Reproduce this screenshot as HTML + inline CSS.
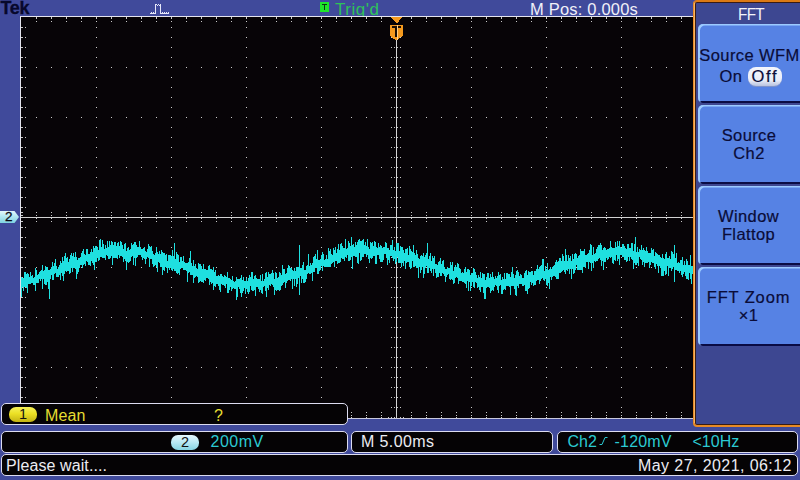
<!DOCTYPE html>
<html>
<head>
<meta charset="utf-8">
<title>Tek</title>
<style>
html,body{margin:0;padding:0;overflow:hidden;}
#root{position:absolute;left:0;top:0;width:800px;height:480px;overflow:hidden;}
body{width:800px;height:480px;overflow:hidden;background:#404a9b;font-family:"Liberation Sans",sans-serif;position:relative;}
.abs{position:absolute;}
#plot{left:21px;top:17px;width:675px;height:401px;background:#070407;}
#bl{left:20px;top:16px;width:1px;height:402px;background:#e4e4ee;}
#bt{left:20px;top:16px;width:676px;height:1px;background:#e4e4ee;}
#bb{left:20px;top:418px;width:676px;height:1px;background:#c8c8dc;}
svg{position:absolute;left:0;top:0;}
.t{position:absolute;white-space:nowrap;line-height:1;}
#tek{left:0.5px;top:-1px;font-size:18px;font-weight:bold;color:#07082c;letter-spacing:-0.3px;-webkit-text-stroke:0.3px #07082c;}
#trig{left:335px;top:1px;font-size:17px;color:#2ec25a;letter-spacing:0.5px;}
#mpos{left:530px;top:1px;font-size:16.5px;color:#f0f0f8;letter-spacing:0.2px;}
#tbox{left:320px;top:2px;width:9px;height:10px;background:#1fe62a;}
#menu{left:693px;top:0px;width:120px;height:423px;border:2.500px solid #e88a26;border-top-color:#dc7a14;border-radius:4px;background:#3d4791;box-sizing:content-box;box-shadow:inset 0 0 0 1px #3a1c14;}
.btn{position:absolute;left:698px;width:110px;height:79px;border-radius:5px;background:linear-gradient(to bottom,#5682e4 0,#5682e4 77.5px,#0a0c44 77.5px,#0a0c44 79px);box-shadow:inset 2px 1.500px 0 #9ccaff;}
.bt{position:absolute;left:697px;width:103px;text-align:center;font-size:16.5px;letter-spacing:0.4px;color:#0a0c38;line-height:18.200px;white-space:nowrap;-webkit-text-stroke:0.2px #0a0c38;}
#fft{left:737.500px;top:6px;font-size:16.5px;letter-spacing:-0.8px;color:#f4f4fa;transform:scaleX(0.93);transform-origin:0 0;}
.box{position:absolute;background:#050305;border:1px solid #dcdcf0;border-radius:5px;box-sizing:border-box;}
.pill{position:absolute;border-radius:7px;text-align:center;color:#111;font-size:14px;line-height:14px;}
</style>
</head>
<body>
<div id="root">
<div class="t" id="tek">Tek</div>
<div class="abs" id="tbox"></div>
<svg width="800" height="480" viewBox="0 0 800 480" shape-rendering="crispEdges"><path fill="#0a3a14" d="M322 4h5v1h-5zM324 4h1v6h-1z"/></svg>
<div class="t" id="trig">Trig'd</div>
<div class="t" id="mpos">M Pos: 0.000s</div>
<div class="abs" id="plot"></div>
<div class="abs" id="bl"></div>
<div class="abs" id="bt"></div>
<div class="abs" id="bb"></div>

<svg width="800" height="480" viewBox="0 0 800 480" shape-rendering="crispEdges">
<path fill="#c9c9c9" d="M25 27h1v1h-1zM25 37h1v1h-1zM25 47h1v1h-1zM25 57h1v1h-1zM25 67h1v1h-1zM25 77h1v1h-1zM25 87h1v1h-1zM25 97h1v1h-1zM25 107h1v1h-1zM25 117h1v1h-1zM25 127h1v1h-1zM25 137h1v1h-1zM25 147h1v1h-1zM25 157h1v1h-1zM25 167h1v1h-1zM25 177h1v1h-1zM25 187h1v1h-1zM25 197h1v1h-1zM25 207h1v1h-1zM25 217h1v1h-1zM25 227h1v1h-1zM25 237h1v1h-1zM25 247h1v1h-1zM25 257h1v1h-1zM25 267h1v1h-1zM25 277h1v1h-1zM25 287h1v1h-1zM25 297h1v1h-1zM25 307h1v1h-1zM25 317h1v1h-1zM25 327h1v1h-1zM25 337h1v1h-1zM25 347h1v1h-1zM25 357h1v1h-1zM25 367h1v1h-1zM25 377h1v1h-1zM25 387h1v1h-1zM25 397h1v1h-1zM25 407h1v1h-1zM36 21h1v1h-1zM36 67h1v1h-1zM36 117h1v1h-1zM36 167h1v1h-1zM36 212h1v1h-1zM36 215h1v1h-1zM36 217h1v1h-1zM36 218h1v1h-1zM36 221h1v1h-1zM36 267h1v1h-1zM36 317h1v1h-1zM36 367h1v1h-1zM36 412h1v1h-1zM36 415h1v1h-1zM51 21h1v1h-1zM51 67h1v1h-1zM51 117h1v1h-1zM51 167h1v1h-1zM51 212h1v1h-1zM51 215h1v1h-1zM51 217h1v1h-1zM51 218h1v1h-1zM51 221h1v1h-1zM51 267h1v1h-1zM51 317h1v1h-1zM51 367h1v1h-1zM51 412h1v1h-1zM51 415h1v1h-1zM66 21h1v1h-1zM66 67h1v1h-1zM66 117h1v1h-1zM66 167h1v1h-1zM66 212h1v1h-1zM66 215h1v1h-1zM66 217h1v1h-1zM66 218h1v1h-1zM66 221h1v1h-1zM66 267h1v1h-1zM66 317h1v1h-1zM66 367h1v1h-1zM66 412h1v1h-1zM66 415h1v1h-1zM81 21h1v1h-1zM81 67h1v1h-1zM81 117h1v1h-1zM81 167h1v1h-1zM81 212h1v1h-1zM81 215h1v1h-1zM81 217h1v1h-1zM81 218h1v1h-1zM81 221h1v1h-1zM81 267h1v1h-1zM81 317h1v1h-1zM81 367h1v1h-1zM81 412h1v1h-1zM81 415h1v1h-1zM96 21h1v1h-1zM96 27h1v1h-1zM96 37h1v1h-1zM96 47h1v1h-1zM96 57h1v1h-1zM96 67h1v1h-1zM96 77h1v1h-1zM96 87h1v1h-1zM96 97h1v1h-1zM96 107h1v1h-1zM96 117h1v1h-1zM96 127h1v1h-1zM96 137h1v1h-1zM96 147h1v1h-1zM96 157h1v1h-1zM96 167h1v1h-1zM96 177h1v1h-1zM96 187h1v1h-1zM96 197h1v1h-1zM96 207h1v1h-1zM96 212h1v1h-1zM96 215h1v1h-1zM96 217h1v1h-1zM96 218h1v1h-1zM96 221h1v1h-1zM96 227h1v1h-1zM96 237h1v1h-1zM96 247h1v1h-1zM96 257h1v1h-1zM96 267h1v1h-1zM96 277h1v1h-1zM96 287h1v1h-1zM96 297h1v1h-1zM96 307h1v1h-1zM96 317h1v1h-1zM96 327h1v1h-1zM96 337h1v1h-1zM96 347h1v1h-1zM96 357h1v1h-1zM96 367h1v1h-1zM96 377h1v1h-1zM96 387h1v1h-1zM96 397h1v1h-1zM96 407h1v1h-1zM96 412h1v1h-1zM96 415h1v1h-1zM111 21h1v1h-1zM111 67h1v1h-1zM111 117h1v1h-1zM111 167h1v1h-1zM111 212h1v1h-1zM111 215h1v1h-1zM111 217h1v1h-1zM111 218h1v1h-1zM111 221h1v1h-1zM111 267h1v1h-1zM111 317h1v1h-1zM111 367h1v1h-1zM111 412h1v1h-1zM111 415h1v1h-1zM126 21h1v1h-1zM126 67h1v1h-1zM126 117h1v1h-1zM126 167h1v1h-1zM126 212h1v1h-1zM126 215h1v1h-1zM126 217h1v1h-1zM126 218h1v1h-1zM126 221h1v1h-1zM126 267h1v1h-1zM126 317h1v1h-1zM126 367h1v1h-1zM126 412h1v1h-1zM126 415h1v1h-1zM141 21h1v1h-1zM141 67h1v1h-1zM141 117h1v1h-1zM141 167h1v1h-1zM141 212h1v1h-1zM141 215h1v1h-1zM141 217h1v1h-1zM141 218h1v1h-1zM141 221h1v1h-1zM141 267h1v1h-1zM141 317h1v1h-1zM141 367h1v1h-1zM141 412h1v1h-1zM141 415h1v1h-1zM156 21h1v1h-1zM156 67h1v1h-1zM156 117h1v1h-1zM156 167h1v1h-1zM156 212h1v1h-1zM156 215h1v1h-1zM156 217h1v1h-1zM156 218h1v1h-1zM156 221h1v1h-1zM156 267h1v1h-1zM156 317h1v1h-1zM156 367h1v1h-1zM156 412h1v1h-1zM156 415h1v1h-1zM171 21h1v1h-1zM171 27h1v1h-1zM171 37h1v1h-1zM171 47h1v1h-1zM171 57h1v1h-1zM171 67h1v1h-1zM171 77h1v1h-1zM171 87h1v1h-1zM171 97h1v1h-1zM171 107h1v1h-1zM171 117h1v1h-1zM171 127h1v1h-1zM171 137h1v1h-1zM171 147h1v1h-1zM171 157h1v1h-1zM171 167h1v1h-1zM171 177h1v1h-1zM171 187h1v1h-1zM171 197h1v1h-1zM171 207h1v1h-1zM171 212h1v1h-1zM171 215h1v1h-1zM171 217h1v1h-1zM171 218h1v1h-1zM171 221h1v1h-1zM171 227h1v1h-1zM171 237h1v1h-1zM171 247h1v1h-1zM171 257h1v1h-1zM171 267h1v1h-1zM171 277h1v1h-1zM171 287h1v1h-1zM171 297h1v1h-1zM171 307h1v1h-1zM171 317h1v1h-1zM171 327h1v1h-1zM171 337h1v1h-1zM171 347h1v1h-1zM171 357h1v1h-1zM171 367h1v1h-1zM171 377h1v1h-1zM171 387h1v1h-1zM171 397h1v1h-1zM171 407h1v1h-1zM171 412h1v1h-1zM171 415h1v1h-1zM186 21h1v1h-1zM186 67h1v1h-1zM186 117h1v1h-1zM186 167h1v1h-1zM186 212h1v1h-1zM186 215h1v1h-1zM186 217h1v1h-1zM186 218h1v1h-1zM186 221h1v1h-1zM186 267h1v1h-1zM186 317h1v1h-1zM186 367h1v1h-1zM186 412h1v1h-1zM186 415h1v1h-1zM201 21h1v1h-1zM201 67h1v1h-1zM201 117h1v1h-1zM201 167h1v1h-1zM201 212h1v1h-1zM201 215h1v1h-1zM201 217h1v1h-1zM201 218h1v1h-1zM201 221h1v1h-1zM201 267h1v1h-1zM201 317h1v1h-1zM201 367h1v1h-1zM201 412h1v1h-1zM201 415h1v1h-1zM216 21h1v1h-1zM216 67h1v1h-1zM216 117h1v1h-1zM216 167h1v1h-1zM216 212h1v1h-1zM216 215h1v1h-1zM216 217h1v1h-1zM216 218h1v1h-1zM216 221h1v1h-1zM216 267h1v1h-1zM216 317h1v1h-1zM216 367h1v1h-1zM216 412h1v1h-1zM216 415h1v1h-1zM231 21h1v1h-1zM231 67h1v1h-1zM231 117h1v1h-1zM231 167h1v1h-1zM231 212h1v1h-1zM231 215h1v1h-1zM231 217h1v1h-1zM231 218h1v1h-1zM231 221h1v1h-1zM231 267h1v1h-1zM231 317h1v1h-1zM231 367h1v1h-1zM231 412h1v1h-1zM231 415h1v1h-1zM246 21h1v1h-1zM246 27h1v1h-1zM246 37h1v1h-1zM246 47h1v1h-1zM246 57h1v1h-1zM246 67h1v1h-1zM246 77h1v1h-1zM246 87h1v1h-1zM246 97h1v1h-1zM246 107h1v1h-1zM246 117h1v1h-1zM246 127h1v1h-1zM246 137h1v1h-1zM246 147h1v1h-1zM246 157h1v1h-1zM246 167h1v1h-1zM246 177h1v1h-1zM246 187h1v1h-1zM246 197h1v1h-1zM246 207h1v1h-1zM246 212h1v1h-1zM246 215h1v1h-1zM246 217h1v1h-1zM246 218h1v1h-1zM246 221h1v1h-1zM246 227h1v1h-1zM246 237h1v1h-1zM246 247h1v1h-1zM246 257h1v1h-1zM246 267h1v1h-1zM246 277h1v1h-1zM246 287h1v1h-1zM246 297h1v1h-1zM246 307h1v1h-1zM246 317h1v1h-1zM246 327h1v1h-1zM246 337h1v1h-1zM246 347h1v1h-1zM246 357h1v1h-1zM246 367h1v1h-1zM246 377h1v1h-1zM246 387h1v1h-1zM246 397h1v1h-1zM246 407h1v1h-1zM246 412h1v1h-1zM246 415h1v1h-1zM261 21h1v1h-1zM261 67h1v1h-1zM261 117h1v1h-1zM261 167h1v1h-1zM261 212h1v1h-1zM261 215h1v1h-1zM261 217h1v1h-1zM261 218h1v1h-1zM261 221h1v1h-1zM261 267h1v1h-1zM261 317h1v1h-1zM261 367h1v1h-1zM261 412h1v1h-1zM261 415h1v1h-1zM276 21h1v1h-1zM276 67h1v1h-1zM276 117h1v1h-1zM276 167h1v1h-1zM276 212h1v1h-1zM276 215h1v1h-1zM276 217h1v1h-1zM276 218h1v1h-1zM276 221h1v1h-1zM276 267h1v1h-1zM276 317h1v1h-1zM276 367h1v1h-1zM276 412h1v1h-1zM276 415h1v1h-1zM291 21h1v1h-1zM291 67h1v1h-1zM291 117h1v1h-1zM291 167h1v1h-1zM291 212h1v1h-1zM291 215h1v1h-1zM291 217h1v1h-1zM291 218h1v1h-1zM291 221h1v1h-1zM291 267h1v1h-1zM291 317h1v1h-1zM291 367h1v1h-1zM291 412h1v1h-1zM291 415h1v1h-1zM306 21h1v1h-1zM306 67h1v1h-1zM306 117h1v1h-1zM306 167h1v1h-1zM306 212h1v1h-1zM306 215h1v1h-1zM306 217h1v1h-1zM306 218h1v1h-1zM306 221h1v1h-1zM306 267h1v1h-1zM306 317h1v1h-1zM306 367h1v1h-1zM306 412h1v1h-1zM306 415h1v1h-1zM321 21h1v1h-1zM321 27h1v1h-1zM321 37h1v1h-1zM321 47h1v1h-1zM321 57h1v1h-1zM321 67h1v1h-1zM321 77h1v1h-1zM321 87h1v1h-1zM321 97h1v1h-1zM321 107h1v1h-1zM321 117h1v1h-1zM321 127h1v1h-1zM321 137h1v1h-1zM321 147h1v1h-1zM321 157h1v1h-1zM321 167h1v1h-1zM321 177h1v1h-1zM321 187h1v1h-1zM321 197h1v1h-1zM321 207h1v1h-1zM321 212h1v1h-1zM321 215h1v1h-1zM321 217h1v1h-1zM321 218h1v1h-1zM321 221h1v1h-1zM321 227h1v1h-1zM321 237h1v1h-1zM321 247h1v1h-1zM321 257h1v1h-1zM321 267h1v1h-1zM321 277h1v1h-1zM321 287h1v1h-1zM321 297h1v1h-1zM321 307h1v1h-1zM321 317h1v1h-1zM321 327h1v1h-1zM321 337h1v1h-1zM321 347h1v1h-1zM321 357h1v1h-1zM321 367h1v1h-1zM321 377h1v1h-1zM321 387h1v1h-1zM321 397h1v1h-1zM321 407h1v1h-1zM321 412h1v1h-1zM321 415h1v1h-1zM336 21h1v1h-1zM336 67h1v1h-1zM336 117h1v1h-1zM336 167h1v1h-1zM336 212h1v1h-1zM336 215h1v1h-1zM336 217h1v1h-1zM336 218h1v1h-1zM336 221h1v1h-1zM336 267h1v1h-1zM336 317h1v1h-1zM336 367h1v1h-1zM336 412h1v1h-1zM336 415h1v1h-1zM351 21h1v1h-1zM351 67h1v1h-1zM351 117h1v1h-1zM351 167h1v1h-1zM351 212h1v1h-1zM351 215h1v1h-1zM351 217h1v1h-1zM351 218h1v1h-1zM351 221h1v1h-1zM351 267h1v1h-1zM351 317h1v1h-1zM351 367h1v1h-1zM351 412h1v1h-1zM351 415h1v1h-1zM366 21h1v1h-1zM366 67h1v1h-1zM366 117h1v1h-1zM366 167h1v1h-1zM366 212h1v1h-1zM366 215h1v1h-1zM366 217h1v1h-1zM366 218h1v1h-1zM366 221h1v1h-1zM366 267h1v1h-1zM366 317h1v1h-1zM366 367h1v1h-1zM366 412h1v1h-1zM366 415h1v1h-1zM381 21h1v1h-1zM381 67h1v1h-1zM381 117h1v1h-1zM381 167h1v1h-1zM381 212h1v1h-1zM381 215h1v1h-1zM381 217h1v1h-1zM381 218h1v1h-1zM381 221h1v1h-1zM381 267h1v1h-1zM381 317h1v1h-1zM381 367h1v1h-1zM381 412h1v1h-1zM381 415h1v1h-1zM388 417h1v1h-1zM391 27h1v1h-1zM391 37h1v1h-1zM391 47h1v1h-1zM391 57h1v1h-1zM391 67h1v1h-1zM391 77h1v1h-1zM391 87h1v1h-1zM391 97h1v1h-1zM391 107h1v1h-1zM391 117h1v1h-1zM391 127h1v1h-1zM391 137h1v1h-1zM391 147h1v1h-1zM391 157h1v1h-1zM391 167h1v1h-1zM391 177h1v1h-1zM391 187h1v1h-1zM391 197h1v1h-1zM391 207h1v1h-1zM391 217h1v1h-1zM391 227h1v1h-1zM391 237h1v1h-1zM391 247h1v1h-1zM391 257h1v1h-1zM391 267h1v1h-1zM391 277h1v1h-1zM391 287h1v1h-1zM391 297h1v1h-1zM391 307h1v1h-1zM391 317h1v1h-1zM391 327h1v1h-1zM391 337h1v1h-1zM391 347h1v1h-1zM391 357h1v1h-1zM391 367h1v1h-1zM391 377h1v1h-1zM391 387h1v1h-1zM391 397h1v1h-1zM391 407h1v1h-1zM391 417h1v1h-1zM394 27h1v1h-1zM394 37h1v1h-1zM394 47h1v1h-1zM394 57h1v1h-1zM394 67h1v1h-1zM394 77h1v1h-1zM394 87h1v1h-1zM394 97h1v1h-1zM394 107h1v1h-1zM394 117h1v1h-1zM394 127h1v1h-1zM394 137h1v1h-1zM394 147h1v1h-1zM394 157h1v1h-1zM394 167h1v1h-1zM394 177h1v1h-1zM394 187h1v1h-1zM394 197h1v1h-1zM394 207h1v1h-1zM394 217h1v1h-1zM394 227h1v1h-1zM394 237h1v1h-1zM394 247h1v1h-1zM394 257h1v1h-1zM394 267h1v1h-1zM394 277h1v1h-1zM394 287h1v1h-1zM394 297h1v1h-1zM394 307h1v1h-1zM394 317h1v1h-1zM394 327h1v1h-1zM394 337h1v1h-1zM394 347h1v1h-1zM394 357h1v1h-1zM394 367h1v1h-1zM394 377h1v1h-1zM394 387h1v1h-1zM394 397h1v1h-1zM394 407h1v1h-1zM394 417h1v1h-1zM396 21h1v1h-1zM396 27h1v1h-1zM396 37h1v1h-1zM396 47h1v1h-1zM396 57h1v1h-1zM396 67h1v1h-1zM396 77h1v1h-1zM396 87h1v1h-1zM396 97h1v1h-1zM396 107h1v1h-1zM396 117h1v1h-1zM396 127h1v1h-1zM396 137h1v1h-1zM396 147h1v1h-1zM396 157h1v1h-1zM396 167h1v1h-1zM396 177h1v1h-1zM396 187h1v1h-1zM396 197h1v1h-1zM396 207h1v1h-1zM396 212h1v1h-1zM396 215h1v1h-1zM396 217h1v1h-1zM396 218h1v1h-1zM396 221h1v1h-1zM396 227h1v1h-1zM396 237h1v1h-1zM396 247h1v1h-1zM396 257h1v1h-1zM396 267h1v1h-1zM396 277h1v1h-1zM396 287h1v1h-1zM396 297h1v1h-1zM396 307h1v1h-1zM396 317h1v1h-1zM396 327h1v1h-1zM396 337h1v1h-1zM396 347h1v1h-1zM396 357h1v1h-1zM396 367h1v1h-1zM396 377h1v1h-1zM396 387h1v1h-1zM396 397h1v1h-1zM396 407h1v1h-1zM396 412h1v1h-1zM396 415h1v1h-1zM397 27h1v1h-1zM397 37h1v1h-1zM397 47h1v1h-1zM397 57h1v1h-1zM397 67h1v1h-1zM397 77h1v1h-1zM397 87h1v1h-1zM397 97h1v1h-1zM397 107h1v1h-1zM397 117h1v1h-1zM397 127h1v1h-1zM397 137h1v1h-1zM397 147h1v1h-1zM397 157h1v1h-1zM397 167h1v1h-1zM397 177h1v1h-1zM397 187h1v1h-1zM397 197h1v1h-1zM397 207h1v1h-1zM397 217h1v1h-1zM397 227h1v1h-1zM397 237h1v1h-1zM397 247h1v1h-1zM397 257h1v1h-1zM397 267h1v1h-1zM397 277h1v1h-1zM397 287h1v1h-1zM397 297h1v1h-1zM397 307h1v1h-1zM397 317h1v1h-1zM397 327h1v1h-1zM397 337h1v1h-1zM397 347h1v1h-1zM397 357h1v1h-1zM397 367h1v1h-1zM397 377h1v1h-1zM397 387h1v1h-1zM397 397h1v1h-1zM397 407h1v1h-1zM400 27h1v1h-1zM400 37h1v1h-1zM400 47h1v1h-1zM400 57h1v1h-1zM400 67h1v1h-1zM400 77h1v1h-1zM400 87h1v1h-1zM400 97h1v1h-1zM400 107h1v1h-1zM400 117h1v1h-1zM400 127h1v1h-1zM400 137h1v1h-1zM400 147h1v1h-1zM400 157h1v1h-1zM400 167h1v1h-1zM400 177h1v1h-1zM400 187h1v1h-1zM400 197h1v1h-1zM400 207h1v1h-1zM400 217h1v1h-1zM400 227h1v1h-1zM400 237h1v1h-1zM400 247h1v1h-1zM400 257h1v1h-1zM400 267h1v1h-1zM400 277h1v1h-1zM400 287h1v1h-1zM400 297h1v1h-1zM400 307h1v1h-1zM400 317h1v1h-1zM400 327h1v1h-1zM400 337h1v1h-1zM400 347h1v1h-1zM400 357h1v1h-1zM400 367h1v1h-1zM400 377h1v1h-1zM400 387h1v1h-1zM400 397h1v1h-1zM400 407h1v1h-1zM400 417h1v1h-1zM403 417h1v1h-1zM411 21h1v1h-1zM411 67h1v1h-1zM411 117h1v1h-1zM411 167h1v1h-1zM411 212h1v1h-1zM411 215h1v1h-1zM411 217h1v1h-1zM411 218h1v1h-1zM411 221h1v1h-1zM411 267h1v1h-1zM411 317h1v1h-1zM411 367h1v1h-1zM411 412h1v1h-1zM411 415h1v1h-1zM426 21h1v1h-1zM426 67h1v1h-1zM426 117h1v1h-1zM426 167h1v1h-1zM426 212h1v1h-1zM426 215h1v1h-1zM426 217h1v1h-1zM426 218h1v1h-1zM426 221h1v1h-1zM426 267h1v1h-1zM426 317h1v1h-1zM426 367h1v1h-1zM426 412h1v1h-1zM426 415h1v1h-1zM441 21h1v1h-1zM441 67h1v1h-1zM441 117h1v1h-1zM441 167h1v1h-1zM441 212h1v1h-1zM441 215h1v1h-1zM441 217h1v1h-1zM441 218h1v1h-1zM441 221h1v1h-1zM441 267h1v1h-1zM441 317h1v1h-1zM441 367h1v1h-1zM441 412h1v1h-1zM441 415h1v1h-1zM456 21h1v1h-1zM456 67h1v1h-1zM456 117h1v1h-1zM456 167h1v1h-1zM456 212h1v1h-1zM456 215h1v1h-1zM456 217h1v1h-1zM456 218h1v1h-1zM456 221h1v1h-1zM456 267h1v1h-1zM456 317h1v1h-1zM456 367h1v1h-1zM456 412h1v1h-1zM456 415h1v1h-1zM471 21h1v1h-1zM471 27h1v1h-1zM471 37h1v1h-1zM471 47h1v1h-1zM471 57h1v1h-1zM471 67h1v1h-1zM471 77h1v1h-1zM471 87h1v1h-1zM471 97h1v1h-1zM471 107h1v1h-1zM471 117h1v1h-1zM471 127h1v1h-1zM471 137h1v1h-1zM471 147h1v1h-1zM471 157h1v1h-1zM471 167h1v1h-1zM471 177h1v1h-1zM471 187h1v1h-1zM471 197h1v1h-1zM471 207h1v1h-1zM471 212h1v1h-1zM471 215h1v1h-1zM471 217h1v1h-1zM471 218h1v1h-1zM471 221h1v1h-1zM471 227h1v1h-1zM471 237h1v1h-1zM471 247h1v1h-1zM471 257h1v1h-1zM471 267h1v1h-1zM471 277h1v1h-1zM471 287h1v1h-1zM471 297h1v1h-1zM471 307h1v1h-1zM471 317h1v1h-1zM471 327h1v1h-1zM471 337h1v1h-1zM471 347h1v1h-1zM471 357h1v1h-1zM471 367h1v1h-1zM471 377h1v1h-1zM471 387h1v1h-1zM471 397h1v1h-1zM471 407h1v1h-1zM471 412h1v1h-1zM471 415h1v1h-1zM486 21h1v1h-1zM486 67h1v1h-1zM486 117h1v1h-1zM486 167h1v1h-1zM486 212h1v1h-1zM486 215h1v1h-1zM486 217h1v1h-1zM486 218h1v1h-1zM486 221h1v1h-1zM486 267h1v1h-1zM486 317h1v1h-1zM486 367h1v1h-1zM486 412h1v1h-1zM486 415h1v1h-1zM501 21h1v1h-1zM501 67h1v1h-1zM501 117h1v1h-1zM501 167h1v1h-1zM501 212h1v1h-1zM501 215h1v1h-1zM501 217h1v1h-1zM501 218h1v1h-1zM501 221h1v1h-1zM501 267h1v1h-1zM501 317h1v1h-1zM501 367h1v1h-1zM501 412h1v1h-1zM501 415h1v1h-1zM516 21h1v1h-1zM516 67h1v1h-1zM516 117h1v1h-1zM516 167h1v1h-1zM516 212h1v1h-1zM516 215h1v1h-1zM516 217h1v1h-1zM516 218h1v1h-1zM516 221h1v1h-1zM516 267h1v1h-1zM516 317h1v1h-1zM516 367h1v1h-1zM516 412h1v1h-1zM516 415h1v1h-1zM531 21h1v1h-1zM531 67h1v1h-1zM531 117h1v1h-1zM531 167h1v1h-1zM531 212h1v1h-1zM531 215h1v1h-1zM531 217h1v1h-1zM531 218h1v1h-1zM531 221h1v1h-1zM531 267h1v1h-1zM531 317h1v1h-1zM531 367h1v1h-1zM531 412h1v1h-1zM531 415h1v1h-1zM546 21h1v1h-1zM546 27h1v1h-1zM546 37h1v1h-1zM546 47h1v1h-1zM546 57h1v1h-1zM546 67h1v1h-1zM546 77h1v1h-1zM546 87h1v1h-1zM546 97h1v1h-1zM546 107h1v1h-1zM546 117h1v1h-1zM546 127h1v1h-1zM546 137h1v1h-1zM546 147h1v1h-1zM546 157h1v1h-1zM546 167h1v1h-1zM546 177h1v1h-1zM546 187h1v1h-1zM546 197h1v1h-1zM546 207h1v1h-1zM546 212h1v1h-1zM546 215h1v1h-1zM546 217h1v1h-1zM546 218h1v1h-1zM546 221h1v1h-1zM546 227h1v1h-1zM546 237h1v1h-1zM546 247h1v1h-1zM546 257h1v1h-1zM546 267h1v1h-1zM546 277h1v1h-1zM546 287h1v1h-1zM546 297h1v1h-1zM546 307h1v1h-1zM546 317h1v1h-1zM546 327h1v1h-1zM546 337h1v1h-1zM546 347h1v1h-1zM546 357h1v1h-1zM546 367h1v1h-1zM546 377h1v1h-1zM546 387h1v1h-1zM546 397h1v1h-1zM546 407h1v1h-1zM546 412h1v1h-1zM546 415h1v1h-1zM561 21h1v1h-1zM561 67h1v1h-1zM561 117h1v1h-1zM561 167h1v1h-1zM561 212h1v1h-1zM561 215h1v1h-1zM561 217h1v1h-1zM561 218h1v1h-1zM561 221h1v1h-1zM561 267h1v1h-1zM561 317h1v1h-1zM561 367h1v1h-1zM561 412h1v1h-1zM561 415h1v1h-1zM576 21h1v1h-1zM576 67h1v1h-1zM576 117h1v1h-1zM576 167h1v1h-1zM576 212h1v1h-1zM576 215h1v1h-1zM576 217h1v1h-1zM576 218h1v1h-1zM576 221h1v1h-1zM576 267h1v1h-1zM576 317h1v1h-1zM576 367h1v1h-1zM576 412h1v1h-1zM576 415h1v1h-1zM591 21h1v1h-1zM591 67h1v1h-1zM591 117h1v1h-1zM591 167h1v1h-1zM591 212h1v1h-1zM591 215h1v1h-1zM591 217h1v1h-1zM591 218h1v1h-1zM591 221h1v1h-1zM591 267h1v1h-1zM591 317h1v1h-1zM591 367h1v1h-1zM591 412h1v1h-1zM591 415h1v1h-1zM606 21h1v1h-1zM606 67h1v1h-1zM606 117h1v1h-1zM606 167h1v1h-1zM606 212h1v1h-1zM606 215h1v1h-1zM606 217h1v1h-1zM606 218h1v1h-1zM606 221h1v1h-1zM606 267h1v1h-1zM606 317h1v1h-1zM606 367h1v1h-1zM606 412h1v1h-1zM606 415h1v1h-1zM621 21h1v1h-1zM621 27h1v1h-1zM621 37h1v1h-1zM621 47h1v1h-1zM621 57h1v1h-1zM621 67h1v1h-1zM621 77h1v1h-1zM621 87h1v1h-1zM621 97h1v1h-1zM621 107h1v1h-1zM621 117h1v1h-1zM621 127h1v1h-1zM621 137h1v1h-1zM621 147h1v1h-1zM621 157h1v1h-1zM621 167h1v1h-1zM621 177h1v1h-1zM621 187h1v1h-1zM621 197h1v1h-1zM621 207h1v1h-1zM621 212h1v1h-1zM621 215h1v1h-1zM621 217h1v1h-1zM621 218h1v1h-1zM621 221h1v1h-1zM621 227h1v1h-1zM621 237h1v1h-1zM621 247h1v1h-1zM621 257h1v1h-1zM621 267h1v1h-1zM621 277h1v1h-1zM621 287h1v1h-1zM621 297h1v1h-1zM621 307h1v1h-1zM621 317h1v1h-1zM621 327h1v1h-1zM621 337h1v1h-1zM621 347h1v1h-1zM621 357h1v1h-1zM621 367h1v1h-1zM621 377h1v1h-1zM621 387h1v1h-1zM621 397h1v1h-1zM621 407h1v1h-1zM621 412h1v1h-1zM621 415h1v1h-1zM636 21h1v1h-1zM636 67h1v1h-1zM636 117h1v1h-1zM636 167h1v1h-1zM636 212h1v1h-1zM636 215h1v1h-1zM636 217h1v1h-1zM636 218h1v1h-1zM636 221h1v1h-1zM636 267h1v1h-1zM636 317h1v1h-1zM636 367h1v1h-1zM636 412h1v1h-1zM636 415h1v1h-1zM651 21h1v1h-1zM651 67h1v1h-1zM651 117h1v1h-1zM651 167h1v1h-1zM651 212h1v1h-1zM651 215h1v1h-1zM651 217h1v1h-1zM651 218h1v1h-1zM651 221h1v1h-1zM651 267h1v1h-1zM651 317h1v1h-1zM651 367h1v1h-1zM651 412h1v1h-1zM651 415h1v1h-1zM666 21h1v1h-1zM666 67h1v1h-1zM666 117h1v1h-1zM666 167h1v1h-1zM666 212h1v1h-1zM666 215h1v1h-1zM666 217h1v1h-1zM666 218h1v1h-1zM666 221h1v1h-1zM666 267h1v1h-1zM666 317h1v1h-1zM666 367h1v1h-1zM666 412h1v1h-1zM666 415h1v1h-1zM681 21h1v1h-1zM681 67h1v1h-1zM681 117h1v1h-1zM681 167h1v1h-1zM681 212h1v1h-1zM681 215h1v1h-1zM681 217h1v1h-1zM681 218h1v1h-1zM681 221h1v1h-1zM681 267h1v1h-1zM681 317h1v1h-1zM681 367h1v1h-1zM681 412h1v1h-1zM681 415h1v1h-1zM36 17h1v2h-1zM36 417h1v1h-1zM51 17h1v2h-1zM51 417h1v1h-1zM66 17h1v2h-1zM66 417h1v1h-1zM81 17h1v2h-1zM81 417h1v1h-1zM96 17h1v2h-1zM96 417h1v1h-1zM111 17h1v2h-1zM111 417h1v1h-1zM126 17h1v2h-1zM126 417h1v1h-1zM141 17h1v2h-1zM141 417h1v1h-1zM156 17h1v2h-1zM156 417h1v1h-1zM171 17h1v2h-1zM171 417h1v1h-1zM186 17h1v2h-1zM186 417h1v1h-1zM201 17h1v2h-1zM201 417h1v1h-1zM216 17h1v2h-1zM216 417h1v1h-1zM231 17h1v2h-1zM231 417h1v1h-1zM246 17h1v2h-1zM246 417h1v1h-1zM261 17h1v2h-1zM261 417h1v1h-1zM276 17h1v2h-1zM276 417h1v1h-1zM291 17h1v2h-1zM291 417h1v1h-1zM306 17h1v2h-1zM306 417h1v1h-1zM321 17h1v2h-1zM321 417h1v1h-1zM336 17h1v2h-1zM336 417h1v1h-1zM351 17h1v2h-1zM351 417h1v1h-1zM366 17h1v2h-1zM366 417h1v1h-1zM381 17h1v2h-1zM381 417h1v1h-1zM396 17h1v2h-1zM396 417h1v1h-1zM411 17h1v2h-1zM411 417h1v1h-1zM426 17h1v2h-1zM426 417h1v1h-1zM441 17h1v2h-1zM441 417h1v1h-1zM456 17h1v2h-1zM456 417h1v1h-1zM471 17h1v2h-1zM471 417h1v1h-1zM486 17h1v2h-1zM486 417h1v1h-1zM501 17h1v2h-1zM501 417h1v1h-1zM516 17h1v2h-1zM516 417h1v1h-1zM531 17h1v2h-1zM531 417h1v1h-1zM546 17h1v2h-1zM546 417h1v1h-1zM561 17h1v2h-1zM561 417h1v1h-1zM576 17h1v2h-1zM576 417h1v1h-1zM591 17h1v2h-1zM591 417h1v1h-1zM606 17h1v2h-1zM606 417h1v1h-1zM621 17h1v2h-1zM621 417h1v1h-1zM636 17h1v2h-1zM636 417h1v1h-1zM651 17h1v2h-1zM651 417h1v1h-1zM666 17h1v2h-1zM666 417h1v1h-1zM681 17h1v2h-1zM681 417h1v1h-1zM21 27h2v1h-2zM21 37h2v1h-2zM21 47h2v1h-2zM21 57h2v1h-2zM21 67h2v1h-2zM21 77h2v1h-2zM21 87h2v1h-2zM21 97h2v1h-2zM21 107h2v1h-2zM21 117h2v1h-2zM21 127h2v1h-2zM21 137h2v1h-2zM21 147h2v1h-2zM21 157h2v1h-2zM21 167h2v1h-2zM21 177h2v1h-2zM21 187h2v1h-2zM21 197h2v1h-2zM21 207h2v1h-2zM21 217h2v1h-2zM21 227h2v1h-2zM21 237h2v1h-2zM21 247h2v1h-2zM21 257h2v1h-2zM21 267h2v1h-2zM21 277h2v1h-2zM21 287h2v1h-2zM21 297h2v1h-2zM21 307h2v1h-2zM21 317h2v1h-2zM21 327h2v1h-2zM21 337h2v1h-2zM21 347h2v1h-2zM21 357h2v1h-2zM21 367h2v1h-2zM21 377h2v1h-2zM21 387h2v1h-2zM21 397h2v1h-2zM21 407h2v1h-2zM21 212h2v1h-2zM21 215h2v1h-2zM21 221h2v1h-2z"/>
<rect x="21" y="217" width="675" height="1" fill="#d2d2d2"/>
<rect x="396" y="38" width="1" height="380" fill="#d2d2d2"/>
<path fill="#1fe0e0" d="M21 277h1v20h-1zM22 278h1v9h-1zM23 278h1v13h-1zM24 272h1v15h-1zM25 272h1v15h-1zM26 274h1v14h-1zM27 273h1v20h-1zM28 274h1v10h-1zM29 277h1v7h-1zM30 272h1v12h-1zM31 276h1v7h-1zM32 275h1v8h-1zM33 278h1v7h-1zM34 277h1v8h-1zM35 268h1v23h-1zM36 270h1v13h-1zM37 275h1v8h-1zM38 274h1v9h-1zM39 272h1v7h-1zM40 271h1v10h-1zM41 270h1v9h-1zM42 265h1v24h-1zM43 271h1v8h-1zM44 270h1v14h-1zM45 266h1v19h-1zM46 267h1v18h-1zM47 267h1v15h-1zM48 270h1v19h-1zM49 270h1v29h-1zM50 269h1v10h-1zM51 267h1v8h-1zM52 262h1v18h-1zM53 266h1v14h-1zM54 263h1v11h-1zM55 259h1v14h-1zM56 266h1v11h-1zM57 269h1v8h-1zM58 267h1v10h-1zM59 265h1v10h-1zM60 261h1v19h-1zM61 263h1v10h-1zM62 257h1v19h-1zM63 261h1v20h-1zM64 256h1v18h-1zM65 253h1v18h-1zM66 258h1v14h-1zM67 257h1v14h-1zM68 262h1v9h-1zM69 259h1v15h-1zM70 255h1v18h-1zM71 253h1v15h-1zM72 256h1v16h-1zM73 253h1v15h-1zM74 257h1v11h-1zM75 252h1v17h-1zM76 257h1v22h-1zM77 260h1v14h-1zM78 258h1v14h-1zM79 258h1v10h-1zM80 257h1v8h-1zM81 253h1v12h-1zM82 251h1v17h-1zM83 249h1v16h-1zM84 254h1v10h-1zM85 255h1v11h-1zM86 249h1v12h-1zM87 249h1v13h-1zM88 254h1v11h-1zM89 254h1v11h-1zM90 252h1v14h-1zM91 249h1v12h-1zM92 252h1v11h-1zM93 246h1v19h-1zM94 248h1v22h-1zM95 246h1v16h-1zM96 246h1v16h-1zM97 247h1v11h-1zM98 250h1v11h-1zM99 240h1v20h-1zM100 239h1v18h-1zM101 247h1v10h-1zM102 240h1v18h-1zM103 244h1v14h-1zM104 249h1v9h-1zM105 245h1v15h-1zM106 248h1v7h-1zM107 241h1v15h-1zM108 247h1v12h-1zM109 241h1v18h-1zM110 245h1v13h-1zM111 241h1v15h-1zM112 242h1v23h-1zM113 245h1v13h-1zM114 242h1v16h-1zM115 242h1v16h-1zM116 246h1v12h-1zM117 243h1v16h-1zM118 242h1v13h-1zM119 246h1v12h-1zM120 241h1v15h-1zM121 242h1v14h-1zM122 245h1v12h-1zM123 249h1v13h-1zM124 244h1v15h-1zM125 243h1v18h-1zM126 251h1v19h-1zM127 248h1v14h-1zM128 247h1v16h-1zM129 250h1v12h-1zM130 249h1v12h-1zM131 243h1v14h-1zM132 245h1v11h-1zM133 244h1v21h-1zM134 242h1v16h-1zM135 242h1v24h-1zM136 245h1v13h-1zM137 247h1v10h-1zM138 247h1v8h-1zM139 241h1v14h-1zM140 247h1v8h-1zM141 249h1v8h-1zM142 249h1v11h-1zM143 248h1v10h-1zM144 247h1v12h-1zM145 251h1v13h-1zM146 252h1v7h-1zM147 249h1v8h-1zM148 244h1v14h-1zM149 246h1v21h-1zM150 247h1v12h-1zM151 246h1v13h-1zM152 251h1v13h-1zM153 254h1v13h-1zM154 255h1v11h-1zM155 253h1v12h-1zM156 247h1v20h-1zM157 252h1v20h-1zM158 254h1v8h-1zM159 251h1v12h-1zM160 254h1v13h-1zM161 250h1v17h-1zM162 252h1v23h-1zM163 253h1v17h-1zM164 253h1v18h-1zM165 255h1v12h-1zM166 254h1v14h-1zM167 261h1v12h-1zM168 255h1v13h-1zM169 255h1v15h-1zM170 255h1v13h-1zM171 256h1v14h-1zM172 250h1v21h-1zM173 256h1v13h-1zM174 243h1v28h-1zM175 259h1v12h-1zM176 252h1v21h-1zM177 254h1v20h-1zM178 255h1v18h-1zM179 262h1v13h-1zM180 257h1v12h-1zM181 257h1v11h-1zM182 261h1v7h-1zM183 256h1v14h-1zM184 262h1v8h-1zM185 263h1v7h-1zM186 263h1v8h-1zM187 263h1v19h-1zM188 262h1v11h-1zM189 258h1v14h-1zM190 251h1v24h-1zM191 263h1v12h-1zM192 266h1v9h-1zM193 260h1v23h-1zM194 266h1v12h-1zM195 264h1v13h-1zM196 268h1v8h-1zM197 269h1v8h-1zM198 263h1v20h-1zM199 264h1v18h-1zM200 264h1v17h-1zM201 266h1v16h-1zM202 269h1v13h-1zM203 264h1v19h-1zM204 269h1v11h-1zM205 269h1v12h-1zM206 270h1v8h-1zM207 270h1v8h-1zM208 266h1v13h-1zM209 265h1v20h-1zM210 269h1v13h-1zM211 269h1v15h-1zM212 270h1v13h-1zM213 267h1v23h-1zM214 272h1v14h-1zM215 270h1v17h-1zM216 276h1v8h-1zM217 276h1v8h-1zM218 275h1v11h-1zM219 276h1v14h-1zM220 274h1v18h-1zM221 274h1v10h-1zM222 276h1v9h-1zM223 277h1v8h-1zM224 275h1v11h-1zM225 276h1v12h-1zM226 277h1v7h-1zM227 272h1v21h-1zM228 278h1v15h-1zM229 278h1v12h-1zM230 279h1v8h-1zM231 280h1v11h-1zM232 276h1v13h-1zM233 281h1v7h-1zM234 282h1v7h-1zM235 281h1v8h-1zM236 277h1v23h-1zM237 279h1v18h-1zM238 279h1v8h-1zM239 279h1v10h-1zM240 278h1v15h-1zM241 275h1v22h-1zM242 280h1v13h-1zM243 277h1v14h-1zM244 281h1v7h-1zM245 281h1v13h-1zM246 278h1v11h-1zM247 281h1v11h-1zM248 278h1v16h-1zM249 275h1v17h-1zM250 277h1v9h-1zM251 272h1v18h-1zM252 272h1v19h-1zM253 279h1v12h-1zM254 276h1v14h-1zM255 275h1v21h-1zM256 278h1v9h-1zM257 279h1v8h-1zM258 279h1v10h-1zM259 279h1v13h-1zM260 275h1v15h-1zM261 281h1v12h-1zM262 274h1v20h-1zM263 281h1v6h-1zM264 279h1v7h-1zM265 273h1v18h-1zM266 272h1v25h-1zM267 277h1v11h-1zM268 272h1v18h-1zM269 274h1v11h-1zM270 274h1v12h-1zM271 273h1v11h-1zM272 270h1v15h-1zM273 273h1v14h-1zM274 279h1v16h-1zM275 272h1v18h-1zM276 273h1v18h-1zM277 278h1v12h-1zM278 277h1v13h-1zM279 272h1v19h-1zM280 273h1v17h-1zM281 275h1v11h-1zM282 265h1v20h-1zM283 269h1v14h-1zM284 269h1v13h-1zM285 274h1v14h-1zM286 273h1v10h-1zM287 268h1v13h-1zM288 265h1v15h-1zM289 266h1v14h-1zM290 268h1v13h-1zM291 268h1v11h-1zM292 270h1v19h-1zM293 271h1v8h-1zM294 268h1v18h-1zM295 271h1v8h-1zM296 267h1v20h-1zM297 267h1v17h-1zM298 267h1v11h-1zM299 245h1v50h-1zM300 268h1v8h-1zM301 268h1v15h-1zM302 265h1v14h-1zM303 262h1v21h-1zM304 270h1v13h-1zM305 270h1v12h-1zM306 266h1v13h-1zM307 265h1v9h-1zM308 254h1v19h-1zM309 266h1v8h-1zM310 263h1v11h-1zM311 265h1v8h-1zM312 263h1v18h-1zM313 257h1v15h-1zM314 256h1v16h-1zM315 254h1v14h-1zM316 259h1v9h-1zM317 250h1v24h-1zM318 260h1v14h-1zM319 260h1v11h-1zM320 259h1v11h-1zM321 255h1v11h-1zM322 252h1v19h-1zM323 254h1v12h-1zM324 260h1v7h-1zM325 259h1v8h-1zM326 255h1v12h-1zM327 259h1v8h-1zM328 248h1v19h-1zM329 251h1v16h-1zM330 249h1v18h-1zM331 254h1v10h-1zM332 255h1v8h-1zM333 248h1v14h-1zM334 250h1v17h-1zM335 247h1v14h-1zM336 253h1v8h-1zM337 249h1v15h-1zM338 244h1v19h-1zM339 250h1v13h-1zM340 244h1v18h-1zM341 243h1v15h-1zM342 246h1v13h-1zM343 248h1v11h-1zM344 248h1v13h-1zM345 239h1v18h-1zM346 249h1v9h-1zM347 248h1v7h-1zM348 241h1v20h-1zM349 243h1v18h-1zM350 246h1v14h-1zM351 237h1v20h-1zM352 245h1v24h-1zM353 244h1v12h-1zM354 247h1v9h-1zM355 242h1v15h-1zM356 245h1v12h-1zM357 242h1v21h-1zM358 240h1v24h-1zM359 239h1v14h-1zM360 241h1v20h-1zM361 241h1v19h-1zM362 240h1v17h-1zM363 239h1v18h-1zM364 245h1v9h-1zM365 242h1v12h-1zM366 246h1v11h-1zM367 239h1v16h-1zM368 247h1v12h-1zM369 249h1v14h-1zM370 242h1v16h-1zM371 243h1v16h-1zM372 242h1v16h-1zM373 246h1v10h-1zM374 241h1v15h-1zM375 242h1v22h-1zM376 247h1v17h-1zM377 248h1v7h-1zM378 243h1v12h-1zM379 247h1v12h-1zM380 245h1v17h-1zM381 246h1v16h-1zM382 248h1v14h-1zM383 247h1v13h-1zM384 247h1v7h-1zM385 242h1v12h-1zM386 243h1v15h-1zM387 248h1v17h-1zM388 248h1v12h-1zM389 250h1v13h-1zM390 245h1v11h-1zM391 245h1v11h-1zM392 240h1v18h-1zM393 250h1v11h-1zM394 247h1v12h-1zM395 251h1v13h-1zM396 243h1v19h-1zM397 243h1v14h-1zM398 243h1v20h-1zM399 251h1v12h-1zM400 246h1v17h-1zM401 247h1v20h-1zM402 247h1v16h-1zM403 250h1v16h-1zM404 253h1v8h-1zM405 249h1v20h-1zM406 249h1v14h-1zM407 248h1v14h-1zM408 255h1v7h-1zM409 246h1v21h-1zM410 249h1v20h-1zM411 251h1v17h-1zM412 252h1v9h-1zM413 245h1v22h-1zM414 253h1v14h-1zM415 255h1v11h-1zM416 250h1v18h-1zM417 254h1v14h-1zM418 258h1v20h-1zM419 259h1v8h-1zM420 256h1v17h-1zM421 255h1v15h-1zM422 256h1v11h-1zM423 253h1v25h-1zM424 257h1v17h-1zM425 255h1v13h-1zM426 253h1v13h-1zM427 243h1v30h-1zM428 259h1v14h-1zM429 256h1v12h-1zM430 253h1v18h-1zM431 261h1v12h-1zM432 256h1v13h-1zM433 258h1v18h-1zM434 256h1v13h-1zM435 264h1v9h-1zM436 264h1v14h-1zM437 265h1v12h-1zM438 262h1v15h-1zM439 261h1v12h-1zM440 258h1v18h-1zM441 264h1v12h-1zM442 261h1v12h-1zM443 260h1v14h-1zM444 267h1v9h-1zM445 269h1v13h-1zM446 269h1v8h-1zM447 267h1v8h-1zM448 268h1v6h-1zM449 268h1v11h-1zM450 262h1v18h-1zM451 265h1v14h-1zM452 262h1v18h-1zM453 271h1v13h-1zM454 267h1v16h-1zM455 265h1v13h-1zM456 267h1v10h-1zM457 263h1v15h-1zM458 264h1v20h-1zM459 268h1v13h-1zM460 269h1v12h-1zM461 273h1v8h-1zM462 272h1v10h-1zM463 273h1v9h-1zM464 269h1v14h-1zM465 267h1v17h-1zM466 272h1v16h-1zM467 269h1v12h-1zM468 269h1v22h-1zM469 270h1v12h-1zM470 275h1v16h-1zM471 273h1v13h-1zM472 273h1v9h-1zM473 268h1v19h-1zM474 269h1v19h-1zM475 272h1v10h-1zM476 275h1v8h-1zM477 278h1v10h-1zM478 275h1v12h-1zM479 277h1v13h-1zM480 272h1v20h-1zM481 278h1v9h-1zM482 273h1v14h-1zM483 274h1v19h-1zM484 274h1v25h-1zM485 280h1v19h-1zM486 277h1v11h-1zM487 273h1v14h-1zM488 273h1v14h-1zM489 278h1v10h-1zM490 274h1v19h-1zM491 277h1v14h-1zM492 272h1v18h-1zM493 277h1v14h-1zM494 279h1v8h-1zM495 276h1v9h-1zM496 278h1v8h-1zM497 276h1v14h-1zM498 272h1v21h-1zM499 275h1v11h-1zM500 274h1v11h-1zM501 280h1v14h-1zM502 277h1v17h-1zM503 279h1v11h-1zM504 273h1v16h-1zM505 279h1v11h-1zM506 273h1v13h-1zM507 273h1v13h-1zM508 274h1v12h-1zM509 274h1v13h-1zM510 277h1v18h-1zM511 272h1v14h-1zM512 267h1v19h-1zM513 274h1v12h-1zM514 278h1v11h-1zM515 275h1v20h-1zM516 271h1v25h-1zM517 270h1v16h-1zM518 272h1v16h-1zM519 276h1v8h-1zM520 274h1v10h-1zM521 275h1v9h-1zM522 278h1v8h-1zM523 278h1v8h-1zM524 273h1v12h-1zM525 271h1v20h-1zM526 270h1v21h-1zM527 275h1v19h-1zM528 271h1v18h-1zM529 272h1v16h-1zM530 272h1v10h-1zM531 271h1v14h-1zM532 271h1v12h-1zM533 275h1v11h-1zM534 271h1v14h-1zM535 271h1v14h-1zM536 269h1v12h-1zM537 265h1v15h-1zM538 269h1v11h-1zM539 267h1v17h-1zM540 266h1v15h-1zM541 265h1v14h-1zM542 259h1v19h-1zM543 259h1v21h-1zM544 271h1v10h-1zM545 266h1v13h-1zM546 269h1v16h-1zM547 263h1v23h-1zM548 270h1v13h-1zM549 269h1v20h-1zM550 267h1v10h-1zM551 269h1v11h-1zM552 267h1v10h-1zM553 266h1v10h-1zM554 265h1v11h-1zM555 262h1v15h-1zM556 260h1v19h-1zM557 262h1v17h-1zM558 261h1v18h-1zM559 258h1v15h-1zM560 258h1v15h-1zM561 261h1v11h-1zM562 254h1v17h-1zM563 256h1v14h-1zM564 261h1v11h-1zM565 249h1v25h-1zM566 255h1v15h-1zM567 261h1v10h-1zM568 255h1v14h-1zM569 258h1v16h-1zM570 256h1v13h-1zM571 261h1v18h-1zM572 254h1v15h-1zM573 259h1v15h-1zM574 254h1v19h-1zM575 253h1v17h-1zM576 254h1v11h-1zM577 258h1v12h-1zM578 256h1v14h-1zM579 255h1v15h-1zM580 249h1v21h-1zM581 251h1v19h-1zM582 251h1v22h-1zM583 251h1v16h-1zM584 249h1v18h-1zM585 255h1v13h-1zM586 255h1v7h-1zM587 254h1v8h-1zM588 253h1v16h-1zM589 250h1v12h-1zM590 244h1v19h-1zM591 245h1v26h-1zM592 255h1v8h-1zM593 247h1v21h-1zM594 254h1v7h-1zM595 253h1v9h-1zM596 249h1v12h-1zM597 247h1v14h-1zM598 245h1v14h-1zM599 245h1v13h-1zM600 243h1v17h-1zM601 245h1v21h-1zM602 250h1v11h-1zM603 248h1v22h-1zM604 247h1v15h-1zM605 248h1v14h-1zM606 250h1v8h-1zM607 249h1v11h-1zM608 249h1v10h-1zM609 248h1v9h-1zM610 241h1v17h-1zM611 247h1v10h-1zM612 248h1v15h-1zM613 248h1v16h-1zM614 248h1v12h-1zM615 242h1v19h-1zM616 247h1v8h-1zM617 241h1v20h-1zM618 246h1v13h-1zM619 241h1v24h-1zM620 247h1v8h-1zM621 248h1v7h-1zM622 244h1v13h-1zM623 244h1v13h-1zM624 246h1v14h-1zM625 248h1v12h-1zM626 249h1v13h-1zM627 244h1v17h-1zM628 244h1v13h-1zM629 248h1v13h-1zM630 248h1v9h-1zM631 243h1v16h-1zM632 243h1v17h-1zM633 251h1v18h-1zM634 244h1v19h-1zM635 237h1v28h-1zM636 252h1v13h-1zM637 247h1v16h-1zM638 252h1v14h-1zM639 249h1v8h-1zM640 250h1v9h-1zM641 245h1v15h-1zM642 250h1v15h-1zM643 248h1v14h-1zM644 250h1v17h-1zM645 251h1v12h-1zM646 247h1v16h-1zM647 251h1v12h-1zM648 253h1v9h-1zM649 253h1v15h-1zM650 253h1v12h-1zM651 248h1v14h-1zM652 250h1v13h-1zM653 249h1v14h-1zM654 256h1v11h-1zM655 252h1v17h-1zM656 253h1v11h-1zM657 254h1v12h-1zM658 255h1v18h-1zM659 255h1v11h-1zM660 257h1v11h-1zM661 258h1v18h-1zM662 254h1v22h-1zM663 258h1v18h-1zM664 259h1v12h-1zM665 254h1v21h-1zM666 252h1v22h-1zM667 258h1v8h-1zM668 258h1v18h-1zM669 256h1v12h-1zM670 259h1v9h-1zM671 251h1v20h-1zM672 252h1v17h-1zM673 254h1v13h-1zM674 245h1v37h-1zM675 258h1v12h-1zM676 253h1v17h-1zM677 263h1v8h-1zM678 262h1v9h-1zM679 263h1v10h-1zM680 260h1v11h-1zM681 260h1v15h-1zM682 257h1v20h-1zM683 265h1v9h-1zM684 261h1v11h-1zM685 265h1v11h-1zM686 259h1v20h-1zM687 261h1v18h-1zM688 265h1v15h-1zM689 265h1v8h-1zM690 255h1v24h-1zM691 266h1v18h-1zM692 266h1v8h-1zM693 261h1v14h-1z"/>
<!-- trigger marker -->
<path fill="#f59a1e" d="M391 17h11.500l-5.750 6.500z"/>
<path fill="#f59a1e" d="M390 24.500h12.500v11.500l-6.250 4.500l-6.250-4.500z"/>
<rect x="391.500" y="26" width="9.500" height="2" fill="#1a0f05"/>
<rect x="394.500" y="26" width="2" height="11" fill="#1a0f05"/>
<rect x="396.500" y="25" width="1" height="15" fill="#ffd08a"/>
<!-- pulse icon -->
<path fill="#e6e8fa" d="M150 13h1v1.2h-1zM151 12.3h1v1.2h-1zM152 13h1v1.2h-1zM153 12.3h1v1.2h-1zM154 13h1v1.2h-1zM155 4h1v9.5h-1zM156 4h1v1.1h-1zM157 4.6h1v1.1h-1zM158 4h1v1.1h-1zM159 4.6h1v1.1h-1zM160 4h1v9.5h-1zM161 13h1v1.2h-1zM162 12.3h1v1.2h-1zM163 13h1v1.2h-1zM164 12.3h1v1.2h-1zM165 13h1v1.2h-1zM166 12.3h1v1.2h-1zM167 13h1v1.2h-1zM168 12.3h1v1.2h-1z"/>
</svg>

<!-- channel marker -->
<svg width="800" height="480" viewBox="0 0 800 480">
<defs>
<linearGradient id="g2" x1="0" y1="0" x2="0" y2="1"><stop offset="0" stop-color="#e4f8fc"/><stop offset="0.45" stop-color="#b4e8f2"/><stop offset="1" stop-color="#7fd4e2"/></linearGradient>
</defs>
<path fill="url(#g2)" d="M0 211h14.500l4.500 6l-4.500 6h-14.500z"/>
</svg>
<div class="t" style="left:5px;top:209.500px;font-size:13.5px;color:#0a0a14;-webkit-text-stroke:0.3px #0a0a14;">2</div>

<!-- side menu -->
<div class="abs" id="menu"></div>
<div class="abs" style="left:694px;top:3px;width:1px;height:420px;background:#f4b462;"></div>
<div class="t" id="fft">FFT</div>
<div class="btn" style="top:24px;"></div>
<div class="btn" style="top:105px;"></div>
<div class="btn" style="top:186px;"></div>
<div class="btn" style="top:267px;"></div>
<div class="bt" style="top:45.500px;left:698px;">Source WFM</div>
<div class="bt" style="top:67px;left:719.500px;width:auto;">On</div>
<div class="abs" style="left:748px;top:67px;width:33.500px;height:18.500px;border-radius:8px;background:linear-gradient(#f4f6fc 0%,#e8ecf8 70%,#b8c2de 100%);box-shadow:0 1px 0 #7d92cc;"></div>
<div class="bt" style="top:67px;left:751.500px;width:auto;letter-spacing:1.700px;">Off</div>
<div class="bt" style="top:126px;left:697.500px;">Source<br>Ch2</div>
<div class="bt" style="top:207px;left:697px;">Window<br>Flattop</div>
<div class="bt" style="top:288px;left:697px;"><span style="letter-spacing:0.850px;">FFT Zoom</span><br>×1</div>

<!-- bottom boxes -->
<div class="box" style="left:1px;top:403px;width:347px;height:22px;"></div>
<div class="box" style="left:1px;top:431px;width:347px;height:22px;"></div>
<div class="box" style="left:351px;top:431px;width:202px;height:22px;"></div>
<div class="box" style="left:557px;top:431px;width:241px;height:22px;"></div>
<div class="box" style="left:1px;top:454px;width:797px;height:22px;"></div>

<div class="pill" style="left:9px;top:406.500px;width:28px;height:15px;line-height:15px;font-size:14.5px;background:linear-gradient(#f6f25a 0%,#ece024 45%,#c4b414 100%);">1</div>
<div class="t" style="left:45px;top:408px;font-size:16px;letter-spacing:0.1px;color:#e6de32;">Mean</div>
<div class="t" style="left:214px;top:408px;font-size:16px;color:#e6de32;">?</div>

<div class="pill" style="left:171px;top:434.500px;width:28px;height:15px;line-height:15px;font-size:14.5px;background:linear-gradient(#e6f8fc 0%,#bdeaf4 45%,#86d4e2 100%);">2</div>
<div class="t" style="left:210.500px;top:434px;font-size:16px;letter-spacing:0.5px;color:#2ccad2;">200mV</div>
<div class="t" style="left:361px;top:434px;font-size:16px;letter-spacing:0.4px;color:#ececf2;">M 5.00ms</div>
<div class="t" style="left:567.500px;top:434px;font-size:16px;color:#2ccad2;">Ch2</div>
<div class="t" style="left:614.500px;top:434px;font-size:16px;letter-spacing:0.2px;color:#2ccad2;">-120mV</div>
<div class="t" style="left:692.500px;top:434px;font-size:16px;color:#2ccad2;">&lt;10Hz</div>
<svg width="800" height="480" viewBox="0 0 800 480"><path fill="none" stroke="#2ccad2" stroke-width="1" d="M599.500 444.500h2.500l3-7h2.500"/></svg>

<div class="t" style="left:6px;top:457.500px;font-size:16px;letter-spacing:0.1px;color:#ececf2;">Please wait....</div>
<div class="t" style="left:638px;top:457.500px;font-size:16px;letter-spacing:0.42px;color:#ececf2;">May 27, 2021, 06:12</div>
</div>
</body>
</html>
